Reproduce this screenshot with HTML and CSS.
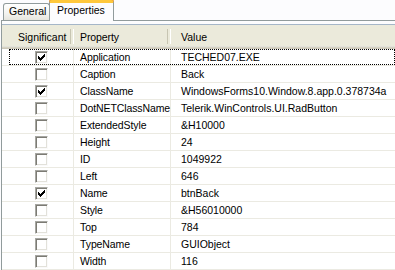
FILE: index.html
```html
<!DOCTYPE html>
<html lang="en">
<head>
    <meta charset="UTF-8">
    <title>Properties</title>
    <link rel="stylesheet" href="styles.css">
</head>
<body>

<div class="tabs">
    <div class="tab">General</div>
    <div class="tab active">Properties</div>
</div>

<div class="page">
    <div class="grid">
        <div class="head">
            <div class="c1">Significant</div>
            <div class="c2">Property</div>
            <div class="c3">Value</div>
        </div>
        <div class="row focus">
            <div class="c1"><span class="chk"><svg viewBox="0 0 7 7" width="7" height="7"><path d="M0.5 2v3M1.5 3v3M2.5 4v3M3.5 3v3M4.5 2v3M5.5 1v3M6.5 0v3" stroke="#000" shape-rendering="crispEdges"/></svg></span></div>
            <div class="c2">Application</div>
            <div class="c3">TECHED07.EXE</div>
        </div>
        <div class="row">
            <div class="c1"><span class="chk"></span></div>
            <div class="c2">Caption</div>
            <div class="c3">Back</div>
        </div>
        <div class="row">
            <div class="c1"><span class="chk"><svg viewBox="0 0 7 7" width="7" height="7"><path d="M0.5 2v3M1.5 3v3M2.5 4v3M3.5 3v3M4.5 2v3M5.5 1v3M6.5 0v3" stroke="#000" shape-rendering="crispEdges"/></svg></span></div>
            <div class="c2">ClassName</div>
            <div class="c3">WindowsForms10.Window.8.app.0.378734a</div>
        </div>
        <div class="row">
            <div class="c1"><span class="chk"></span></div>
            <div class="c2">DotNETClassName</div>
            <div class="c3">Telerik.WinControls.UI.RadButton</div>
        </div>
        <div class="row">
            <div class="c1"><span class="chk"></span></div>
            <div class="c2">ExtendedStyle</div>
            <div class="c3">&amp;H10000</div>
        </div>
        <div class="row">
            <div class="c1"><span class="chk"></span></div>
            <div class="c2">Height</div>
            <div class="c3">24</div>
        </div>
        <div class="row">
            <div class="c1"><span class="chk"></span></div>
            <div class="c2">ID</div>
            <div class="c3">1049922</div>
        </div>
        <div class="row">
            <div class="c1"><span class="chk"></span></div>
            <div class="c2">Left</div>
            <div class="c3">646</div>
        </div>
        <div class="row">
            <div class="c1"><span class="chk"><svg viewBox="0 0 7 7" width="7" height="7"><path d="M0.5 2v3M1.5 3v3M2.5 4v3M3.5 3v3M4.5 2v3M5.5 1v3M6.5 0v3" stroke="#000" shape-rendering="crispEdges"/></svg></span></div>
            <div class="c2">Name</div>
            <div class="c3">btnBack</div>
        </div>
        <div class="row">
            <div class="c1"><span class="chk"></span></div>
            <div class="c2">Style</div>
            <div class="c3">&amp;H56010000</div>
        </div>
        <div class="row">
            <div class="c1"><span class="chk"></span></div>
            <div class="c2">Top</div>
            <div class="c3">784</div>
        </div>
        <div class="row">
            <div class="c1"><span class="chk"></span></div>
            <div class="c2">TypeName</div>
            <div class="c3">GUIObject</div>
        </div>
        <div class="row">
            <div class="c1"><span class="chk"></span></div>
            <div class="c2">Width</div>
            <div class="c3">116</div>
        </div>
    </div>
</div>

</body>
</html>
```

FILE: styles.css
```css
*{
    margin:0;
    padding:0;
    box-sizing: border-box;
}
body{
    width: 395px;
    height: 270px;
    overflow: hidden;
    background: #fcfcfe;
    font-family: "Liberation Sans", Arial, sans-serif;
    font-size: 10.5px;
    color: #000;
}
.tabs{
    height: 21px;
    display: flex;
    align-items: flex-end;
    padding-left: 3px;
    position: relative;
    z-index: 1;
}
.tab{
    height: 17px;
    width: 47px;
    padding-left: 5px;
    line-height: 15px;
    border: 1px solid #919b9c;
    border-bottom: none;
    border-radius: 3px 3px 0 0;
    background: linear-gradient(#ffffff, #f3f3ef 60%, #e6e5dd);
    margin-bottom: 1px;
    white-space: nowrap;
}
.tab.active{
    height: 21px;
    width: 65px;
    padding-left: 7px;
    line-height: 14px;
    margin-bottom: 0;
    margin-left: -1px;
    background: #fcfcfe;
    border-top: 3px solid #ffc83c;
    box-shadow: 0 -1px 0 #e68b2c;
}
.page{
    border-top: 1px solid #919b9c;
    border-left: 1px solid #919b9c;
    margin: -1px 0 0 1px;
    height: 250px;
    padding-top: 3px;
}
.grid{
    border-top: 1px solid #a5b6c8;
    background: #fff;
    height: 100%;
}
.head{
    height: 24px;
    display: flex;
    background: #ebeadb;
    box-shadow: inset 0 -1px 0 #cbc7b8, inset 0 -2px 0 #d6d2c2, inset 0 -3px 0 #e2e2da;
}
.head > div{
    position: relative;
    line-height: 24px;
}
.head .c1{
    padding-left: 16px;
}
.head .c1:after, .head .c2:after{
    content: "";
    position: absolute;
    right: 0;
    top: 4px;
    width: 2px;
    height: 15px;
    border-left: 1px solid #c7c5b2;
    border-right: 1px solid #fff;
}
.c1{
    width: 72px;
    flex-shrink: 0;
}
.c2{
    width: 97px;
    flex-shrink: 0;
    padding-left: 6px;
    white-space: nowrap;
    letter-spacing: -0.1px;
}
.c3{
    flex: 1;
    padding-left: 10px;
    white-space: nowrap;
}
.row{
    height: 17px;
    display: flex;
    position: relative;
    border-bottom: 1px solid #ebeae2;
}
.row > div{
    line-height: 16px;
}
.row .c1, .row .c2{
    border-right: 1px solid #ebeae2;
}
.row .c1{
    display: flex;
    align-items: center;
    padding-left: 33px;
}
.row.focus:before{
    content: "";
    position: absolute;
    left: 7px;
    right: 0;
    top: 0;
    bottom: 0;
    border: 1px dotted #000;
}
.chk{
    width: 13px;
    height: 13px;
    display: block;
    border: 1px solid;
    border-color: #a7a7a2 #fafafa #fafafa #a7a7a2;
    box-shadow: inset 1px 1px 0 #7c7b74, inset -1px -1px 0 #e2e1da;
    background: #fff;
    padding: 2px;
}
.chk svg{
    display: block;
}
```
